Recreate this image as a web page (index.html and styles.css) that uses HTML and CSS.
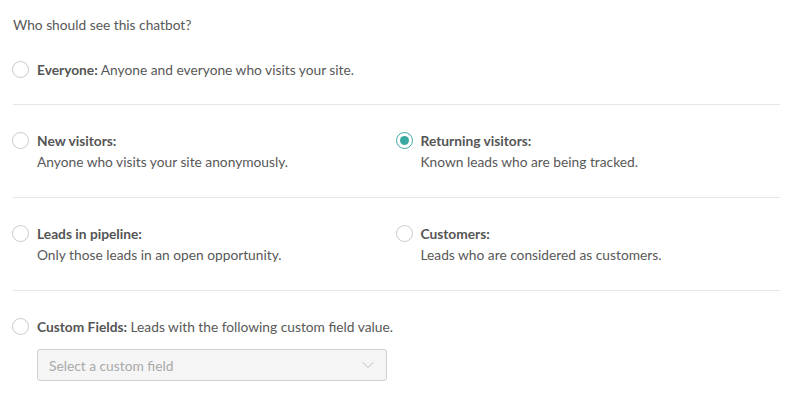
FILE: index.html
```html
<!DOCTYPE html>
<html>
<head>
<meta charset="utf-8">
<link rel="stylesheet" href="styles.css">
</head>
<body>
<div class="page">
  <div class="heading">Who should see this chatbot?</div>

  <div class="section">
    <div class="option">
      <span class="radio"></span>
      <div class="text"><b>Everyone:</b> Anyone and everyone who visits your site.</div>
    </div>
  </div>

  <div class="section grid">
    <div class="option">
      <span class="radio"></span>
      <div class="text"><b>New visitors:</b><br>Anyone who visits your site anonymously.</div>
    </div>
    <div class="option">
      <span class="radio checked"></span>
      <div class="text"><b>Returning visitors:</b><br>Known leads who are being tracked.</div>
    </div>
  </div>

  <div class="section grid">
    <div class="option">
      <span class="radio"></span>
      <div class="text"><b>Leads in pipeline:</b><br>Only those leads in an open opportunity.</div>
    </div>
    <div class="option">
      <span class="radio"></span>
      <div class="text"><b>Customers:</b><br>Leads who are considered as customers.</div>
    </div>
  </div>

  <div class="section last">
    <div class="option">
      <span class="radio"></span>
      <div class="text"><b>Custom Fields:</b> Leads with the following custom field value.</div>
    </div>
    <div class="select">
      <span class="placeholder">Select a custom field</span>
      <svg class="chev" width="12" height="8" viewBox="0 0 12 8"><path d="M1 1.5 L6 6.5 L11 1.5" fill="none" stroke="#b8b8b8" stroke-width="1"/></svg>
    </div>
  </div>
</div>
</body>
</html>
```
FILE: styles.css
```css
html, body {
  margin: 0;
  padding: 0;
  background: #fff;
}
body {
  font-family: Lato, "Open Sans", sans-serif;
  font-size: 13.75px;
  color: #585858;
  line-height: 21px;
}
.page {
  width: 767px;
  padding: 14px 0 0 13px;
}
.heading {
  padding-bottom: 24px;
}
.section {
  padding: 0 0 24px 0;
  border-bottom: 1px solid #e6e6e6;
}
.section + .section {
  padding-top: 25px;
  padding-bottom: 25px;
}
.section.last {
  border-bottom: none;
}
.grid {
  display: grid;
  grid-template-columns: 1fr 1fr;
}
.option {
  display: flex;
  align-items: flex-start;
}
.text b {
  font-weight: 700;
  color: #555;
}
.radio {
  box-sizing: border-box;
  flex: none;
  width: 17px;
  height: 17px;
  margin: 2px 8px 0 -1px;
  border: 1px solid #c9c9c9;
  border-radius: 50%;
  background: #fff;
  display: flex;
  align-items: center;
  justify-content: center;
}
.radio.checked {
  border-color: #3aa9a3;
}
.radio.checked::after {
  content: "";
  width: 9px;
  height: 9px;
  border-radius: 50%;
  background: #3aa9a3;
}
.select {
  box-sizing: border-box;
  margin: 12px 0 0 24px;
  width: 350px;
  height: 32px;
  border: 1px solid #cfcfcf;
  border-radius: 3px;
  background: #f5f5f5;
  display: flex;
  align-items: center;
  justify-content: space-between;
  padding: 0 12px 0 11px;
}
.placeholder {
  color: #a9a9a9;
}
```
